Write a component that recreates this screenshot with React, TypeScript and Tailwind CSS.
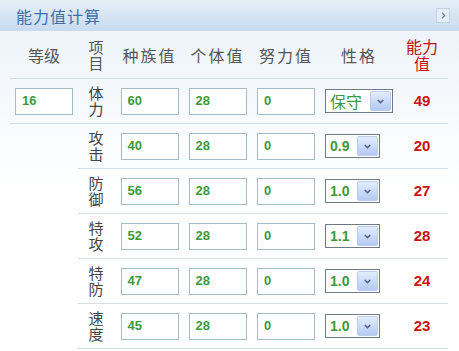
const CJK = "font-['Noto_Sans_CJK_SC','Noto_Sans',sans-serif]";
const NUM = "font-['Liberation_Sans',Arial,sans-serif]";

type Stat = {
  label: [string, string];
  base: number;
  nature: string;
  result: number;
};

const stats: Stat[] = [
  { label: ['体', '力'], base: 60, nature: '保守', result: 49 },
  { label: ['攻', '击'], base: 40, nature: '0.9', result: 20 },
  { label: ['防', '御'], base: 56, nature: '1.0', result: 27 },
  { label: ['特', '攻'], base: 52, nature: '1.1', result: 28 },
  { label: ['特', '防'], base: 47, nature: '1.0', result: 24 },
  { label: ['速', '度'], base: 45, nature: '1.0', result: 23 },
];

function Field({ value }: { value: number | string }) {
  return (
    <div
      className={`w-[58px] h-[27px] border border-[#a3bcc6] bg-white flex items-center pl-[6px] text-[13px] font-bold text-[#3c9a3c] ${NUM}`}
    >
      {value}
    </div>
  );
}

function NatureSelect({ value }: { value: string }) {
  const wide = isNaN(Number(value));
  return (
    <div
      className={`${wide ? 'w-[68px]' : 'w-[55px]'} h-[24px] border border-[#6f7a86] bg-white flex items-center justify-between pl-[4px] pr-[1px]`}
    >
      {wide ? (
        <span className={`text-[16px] leading-none text-[#3c9a3c] ${CJK}`}>{value}</span>
      ) : (
        <span className={`text-[14px] font-bold leading-none text-[#3c9a3c] ${NUM}`}>{value}</span>
      )}
      <div className="w-[21px] h-[20px] rounded-[2px] border border-[#b9cdef] bg-gradient-to-b from-[#e3ecfc] to-[#b4caf3] flex items-center justify-center">
        <svg width="7" height="5" viewBox="0 0 7 5">
          <path d="M0.8 1 L3.5 3.7 L6.2 1" fill="none" stroke="#4d6185" strokeWidth="1.6" />
        </svg>
      </div>
    </div>
  );
}

function Stacked({ a, b, className = '' }: { a: string; b: string; className?: string }) {
  return (
    <div className={`flex flex-col items-center ${CJK} ${className}`}>
      <span>{a}</span>
      <span>{b}</span>
    </div>
  );
}

export default function App() {
  return (
    <div className="w-[459px] h-[351px] bg-white overflow-hidden">
      <div className="h-[31px] bg-gradient-to-b from-[#e6eff8] to-[#c7dbee] flex items-center justify-between pl-[16px] pr-[9px]">
        <span className={`text-[16px] tracking-[1px] text-[#3d70aa] ${CJK}`}>能力值计算</span>
        <div className="w-[14px] h-[15px] border border-[#c3d2df] bg-[#e4edf6] flex items-center justify-center">
          <svg width="5" height="7" viewBox="0 0 5 7">
            <path d="M1 0.8 L3.6 3.5 L1 6.2" fill="none" stroke="#6b87a6" strokeWidth="1.3" />
          </svg>
        </div>
      </div>

      <div className="bg-gradient-to-b from-[#eef4fa] via-white to-white pl-[10px]">
        <div className="w-[438px]">
          <div
            className={`h-[48px] border-b border-[#d2dde4] grid grid-cols-[68px_36px_71px_65px_72px_74px_52px] items-center text-[16px] text-[#555] ${CJK}`}
          >
            <div className="text-center">等级</div>
            <Stacked a="项" b="目" className="text-[15px] leading-[16px]" />
            <div className="text-center tracking-[2px]">种族值</div>
            <div className="text-center tracking-[2px]">个体值</div>
            <div className="text-center tracking-[2px]">努力值</div>
            <div className="text-center tracking-[2px]">性格</div>
            <Stacked a="能力" b="值" className="text-[#c81010] text-[16px] leading-[17px]" />
          </div>

          {stats.map((s, i) => (
            <div key={s.label.join('')} className={`flex h-[45px] ${i === 0 ? 'border-b border-[#d2dde4]' : ''}`}>
              <div className="w-[68px] flex items-center justify-center">
                {i === 0 && <Field value={16} />}
              </div>
              <div
                className={`flex-1 grid grid-cols-[36px_71px_65px_72px_74px_52px] items-center ${i === 0 ? '' : 'border-b border-[#d2dde4]'}`}
              >
                <Stacked a={s.label[0]} b={s.label[1]} className="text-[15px] leading-[16px] text-[#444]" />
                <div className="flex justify-center">
                  <Field value={s.base} />
                </div>
                <div className="flex justify-center">
                  <Field value={28} />
                </div>
                <div className="flex justify-center">
                  <Field value={0} />
                </div>
                <div className="flex pl-[3px]">
                  <NatureSelect value={s.nature} />
                </div>
                <div className={`text-center text-[15px] font-bold text-[#cc1111] ${NUM}`}>{s.result}</div>
              </div>
            </div>
          ))}
        </div>
      </div>
    </div>
  );
}
